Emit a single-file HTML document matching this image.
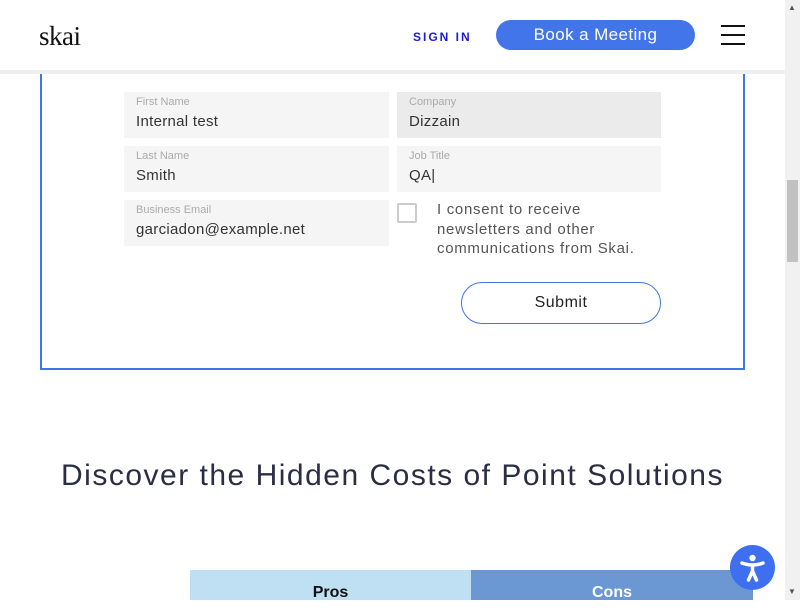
<!DOCTYPE html>
<html><head><meta charset="utf-8"><style>
*{margin:0;padding:0;box-sizing:border-box}
body{width:800px;height:600px;overflow:hidden;background:#fff;font-family:"Liberation Sans",sans-serif;position:relative;color:#222}
.abs{position:absolute}
.hdr{left:0;top:0;width:785px;height:70px;background:#fff;z-index:2}
.line{left:0;top:70px;width:785px;height:4px;background:#eef0f2;z-index:2}
.logo{left:39px;top:21px;font-family:"Liberation Serif",serif;font-size:27px;letter-spacing:-0.5px;color:#111;z-index:3}
.signin{left:413px;top:30px;font-size:12px;font-weight:bold;letter-spacing:2px;color:#1a1adf;z-index:3}
.book{left:496px;top:20px;width:199px;height:30px;border-radius:15px;background:#4274ea;color:#fff;font-size:17px;text-align:center;line-height:29px;letter-spacing:0.4px;z-index:3}
.burg{left:721px;width:24px;height:2px;background:#111;z-index:3}
.box{left:40px;top:60px;width:705px;height:310px;border:2px solid #4274ea;border-top:none}
.f{width:265px;height:46px;background:#f5f5f5}
.f .l{position:absolute;left:12px;top:4px;font-size:11px;color:#aaa}
.f .v{position:absolute;left:12px;top:21px;font-size:15px;color:#333;letter-spacing:0.3px}
.cb{left:397px;top:203px;width:20px;height:20px;border:2px solid #ccc;border-radius:2px}
.consent{left:437px;top:200px;font-size:15px;line-height:19.5px;color:#555;letter-spacing:0.7px}
.submit{left:461px;top:282px;width:200px;height:42px;border:1px solid #4274ea;border-radius:21px;text-align:center;line-height:40px;font-size:16px;color:#222;letter-spacing:0.5px}
.h2{left:0;width:785px;top:459px;text-align:center;font-size:30px;color:#2a2d44;letter-spacing:1.5px}
.pros{left:190px;top:570px;width:281px;height:30px;background:#bfe0f3;text-align:center;font-weight:bold;font-size:16px;line-height:46px;color:#111}
.cons{left:471px;top:570px;width:282px;height:30px;background:#6b98d2;text-align:center;font-weight:bold;font-size:16px;line-height:46px;color:#fff}
.acc{left:730px;top:545px;width:45px;height:45px;border-radius:50%;background:#3e6ff0}
.sb{left:785px;top:0;width:15px;height:600px;background:#f1f1f1}
.thumb{left:787px;top:180px;width:11px;height:82px;background:#c1c1c1}
</style></head><body>
<div class="abs hdr"></div>
<div class="abs line"></div>
<div class="abs logo">skai</div>
<div class="abs signin">SIGN IN</div>
<div class="abs book">Book a Meeting</div>
<div class="abs burg" style="top:25px"></div>
<div class="abs burg" style="top:34px"></div>
<div class="abs burg" style="top:43px"></div>
<div class="abs box"></div>
<div class="abs f" style="left:124px;top:92px"><span class="l">First Name</span><span class="v">Internal test</span></div>
<div class="abs f" style="left:397px;top:92px;width:264px;background:#ebebeb"><span class="l">Company</span><span class="v">Dizzain</span></div>
<div class="abs f" style="left:124px;top:146px"><span class="l">Last Name</span><span class="v">Smith</span></div>
<div class="abs f" style="left:397px;top:146px;width:264px"><span class="l">Job Title</span><span class="v">QA|</span></div>
<div class="abs f" style="left:124px;top:200px"><span class="l">Business Email</span><span class="v">garciadon@example.net</span></div>
<div class="abs cb"></div>
<div class="abs consent">I consent to receive<br>newsletters and other<br>communications from Skai.</div>
<div class="abs submit">Submit</div>
<div class="abs h2">Discover the Hidden Costs of Point Solutions</div>
<div class="abs pros">Pros</div>
<div class="abs cons">Cons</div>
<div class="abs acc"><svg width="45" height="45" viewBox="0 0 45 45"><circle cx="22.5" cy="13" r="3.2" fill="#fff"/><path d="M12 18 Q22.5 22 33 18 M22.5 20 V27 M22.5 26 L18.5 35 M22.5 26 L26.5 35" stroke="#fff" stroke-width="3.5" stroke-linecap="round" fill="none"/></svg></div>
<div class="abs sb"></div>
<div class="abs thumb"></div>
<div class="abs" style="left:788px;top:3px;font-size:8px;color:#555">▲</div>
<div class="abs" style="left:788px;top:587px;font-size:8px;color:#555">▼</div>
</body></html>
